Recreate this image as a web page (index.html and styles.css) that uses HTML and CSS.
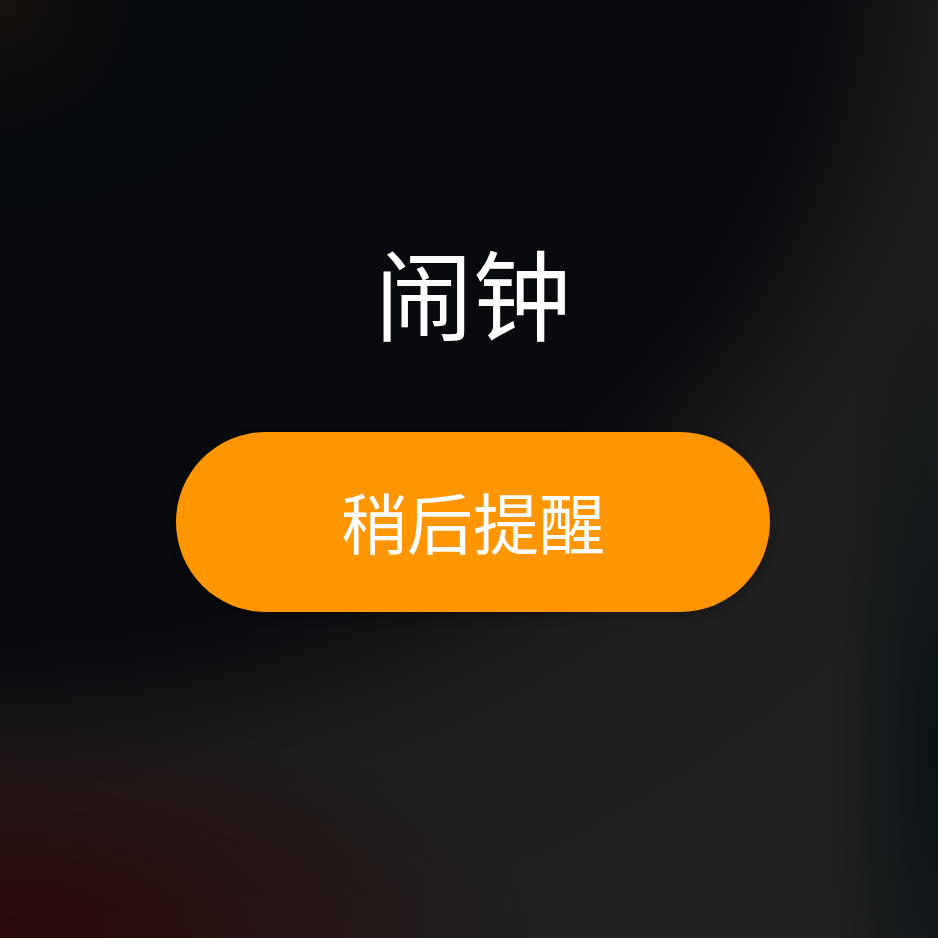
FILE: index.html
```html
<!DOCTYPE html>
<html lang="zh-CN">
<head>
<meta charset="utf-8">
<title>闹钟</title>
<link rel="stylesheet" href="styles.css">
</head>
<body>
<main class="screen">
  <h1 class="title">闹钟</h1>
  <button class="snooze" type="button">稍后提醒</button>
</main>
</body>
</html>
```
FILE: styles.css
```css
html, body {
  margin: 0;
  padding: 0;
  width: 938px;
  height: 938px;
  overflow: hidden;
}

body {
  font-family: "Noto Sans CJK SC", "Noto Sans", sans-serif;
  background-color: #080a0e;
  background-image:
    radial-gradient(140px 140px at 0 0, rgba(70, 40, 15, 0.25), rgba(70, 40, 15, 0) 100%),
    radial-gradient(540px 240px at 0 100%, rgba(46, 0, 0, 0.8), rgba(46, 0, 0, 0) 100%),
    radial-gradient(110px 520px at 100% 80%, rgba(6, 16, 20, 0.85), rgba(6, 16, 20, 0) 100%),
    radial-gradient(960px 870px at 0 -90px, #070a0e 0%, #080a0e 84%, #1d1d1d 102%, #212121 125%);
}

.screen {
  box-sizing: border-box;
  width: 938px;
  height: 938px;
  padding: 232px 0 0 8px;
  display: flex;
  flex-direction: column;
  align-items: center;
}

.title {
  margin: 0;
  font-size: 98px;
  font-weight: 400;
  line-height: 1.2;
  color: #ffffff;
  letter-spacing: 0;
}

.snooze {
  margin-top: 82px;
  width: 594px;
  height: 180px;
  border: none;
  border-radius: 90px;
  background: #ff9500;
  color: #ffffff;
  font-family: "Noto Sans CJK SC", "Noto Sans", sans-serif;
  font-size: 66px;
  font-weight: 400;
  line-height: 1;
  padding: 0 0 4px 0;
  display: flex;
  align-items: center;
  justify-content: center;
  box-shadow: 0 4px 10px rgba(0, 0, 0, 0.2);
}
```
